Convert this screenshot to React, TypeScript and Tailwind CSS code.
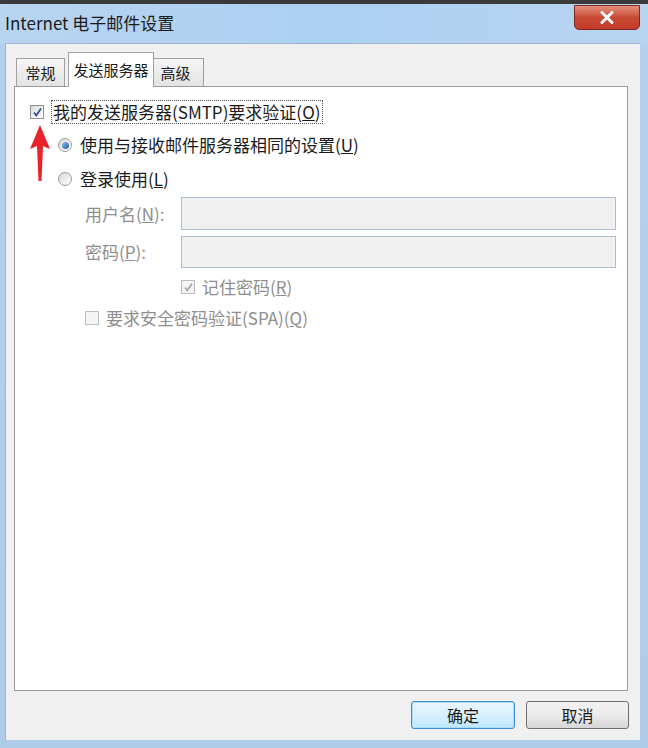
import React from "react";

const font = { fontFamily: '"Noto Sans CJK SC", "Noto Sans", sans-serif' };

function CheckBox({ checked, disabled }: { checked?: boolean; disabled?: boolean }) {
  return (
    <span
      className={`relative inline-flex w-[14px] h-[14px] shrink-0 items-center justify-center border ${
        disabled ? "border-[#bcbcbc] bg-[#f4f4f4]" : "border-[#8e8f8f] bg-gradient-to-br from-[#dcdcdc] to-[#ffffff]"
      }`}
    >
      {checked && (
        <svg width="11" height="11" viewBox="0 0 11 11">
          <path
            d="M2 5.5 L4.3 8.5 L9 1.5"
            fill="none"
            stroke={disabled ? "#a8a8a8" : "#2a4a9a"}
            strokeWidth="1.7"
          />
        </svg>
      )}
    </span>
  );
}

function Radio({ checked }: { checked?: boolean }) {
  return (
    <span className="inline-flex w-[14px] h-[14px] shrink-0 items-center justify-center rounded-full border border-[#9a9a9a] bg-gradient-to-br from-[#d8d8d8] to-[#ffffff]">
      {checked && (
        <span className="w-[7px] h-[7px] rounded-full bg-gradient-to-br from-[#8ec4ec] to-[#1c5a9c]" />
      )}
    </span>
  );
}

export default function App() {
  return (
    <div
      className="w-[648px] h-[748px] overflow-hidden flex flex-col bg-gradient-to-b from-[#b4d2ef] to-[#aecbe8] border-t-[4px] border-[#3a3a3a]"
      style={font}
    >
      {/* 标题栏 */}
      <div className="h-[39px] flex items-start justify-between pl-[5px] pr-[8px] bg-gradient-to-r from-[#b8d4ef] via-[#add0f2] to-[#b8d4ef]">
        <span className="mt-[8px] text-[17px] leading-[22px] text-[#1b1b1b]">Internet 电子邮件设置</span>
        <div className="mt-[1px] w-[66px] h-[25px] rounded-b-[5px] border border-[#7a2a20] bg-gradient-to-b from-[#e4907e] via-[#c94a36] to-[#c23a28] flex items-center justify-center">
          <svg width="14" height="13" viewBox="0 0 14 13">
            <path d="M2 1.5 L12 11.5 M12 1.5 L2 11.5" stroke="#ffffff" strokeWidth="3" strokeLinecap="round" />
          </svg>
        </div>
      </div>

      {/* 窗口主体 */}
      <div className="flex-1 ml-[5px] mr-[8px] mb-[8px] bg-[#f0f0f0] border-l border-t border-[#9fb4cc] flex flex-col pl-[8px] pr-[12px] pt-[7px]">
        {/* 标签页 */}
        <div className="flex items-end h-[35px] pl-[2px] text-[15px] leading-[20px] text-[#1b1b1b] whitespace-nowrap">
          <div className="h-[29px] w-[49px] border border-b-0 border-[#a0a0a0] bg-gradient-to-b from-[#f6f6f6] to-[#e2e2e2] flex items-center justify-center mb-[-1px]">
            常规
          </div>
          <div className="relative z-10 h-[35px] w-[86px] ml-[3px] border border-b-0 border-[#a0a0a0] bg-white flex items-center justify-center mb-[-1px]">
            发送服务器
          </div>
          <div className="h-[29px] w-[50px] border border-b-0 border-l-0 border-[#a0a0a0] bg-gradient-to-b from-[#f6f6f6] to-[#e2e2e2] flex items-center justify-center mb-[-1px] pr-[6px]">
            高级
          </div>
        </div>

        <div className="h-[605px] bg-white border border-[#9c9c9c] pl-[15px] pt-[14px] text-[17px] leading-[22px]">
          {/* 发送服务器验证 */}
          <div className="flex items-center h-[22px]">
            <CheckBox checked />
            <span className="ml-[7px] px-[1px] border border-dotted border-[#555] text-[#1b1b1b]">
              我的发送服务器(SMTP)要求验证(<span className="underline">O</span>)
            </span>
          </div>

          <div className="relative">
            <svg className="absolute left-[-1px] top-[2px]" width="22" height="56" viewBox="0 0 22 56">
              <path d="M11 0 L21 24 L14 21 L12.5 56 L9.5 56 L8 21 L1 24 Z" fill="#e8232a" />
            </svg>
          </div>

          <div className="flex items-center h-[22px] mt-[11px] ml-[28px] text-[#1b1b1b]">
            <Radio checked />
            <span className="ml-[8px]">
              使用与接收邮件服务器相同的设置(<span className="underline">U</span>)
            </span>
          </div>

          <div className="flex items-center h-[22px] mt-[12px] ml-[28px] text-[#1b1b1b]">
            <Radio />
            <span className="ml-[8px]">
              登录使用(<span className="underline">L</span>)
            </span>
          </div>

          {/* 登录信息（禁用） */}
          <div className="ml-[55px] mt-[7px] text-[#8e8e8e]">
            <div className="flex items-center h-[33px]">
              <span className="w-[96px]">
                用户名(<span className="underline">N</span>):
              </span>
              <div className="w-[435px] h-[33px] border border-[#a9bed4] bg-[#f0f0f0]" />
            </div>
            <div className="flex items-center h-[32px] mt-[6px]">
              <span className="w-[96px]">
                密码(<span className="underline">P</span>):
              </span>
              <div className="w-[435px] h-[32px] border border-[#a9bed4] bg-[#f0f0f0]" />
            </div>
            <div className="flex items-center h-[22px] mt-[8px] ml-[96px]">
              <CheckBox checked disabled />
              <span className="ml-[7px]">
                记住密码(<span className="underline">R</span>)
              </span>
            </div>
            <div className="flex items-center h-[22px] mt-[9px]">
              <CheckBox disabled />
              <span className="ml-[7px]">
                要求安全密码验证(SPA)(<span className="underline">Q</span>)
              </span>
            </div>
          </div>
        </div>

        {/* 按钮 */}
        <div className="flex justify-end gap-[11px] mt-[10px] text-[16px] text-[#1b1b1b]">
          <button className="w-[104px] h-[28px] rounded-[3px] border border-[#3c8fd0] bg-gradient-to-b from-[#eaf6fd] via-[#d9f0fc] to-[#bee6fd] shadow-[inset_0_0_0_1px_#a8dcf8] flex items-center justify-center">
            确定
          </button>
          <button className="w-[103px] h-[28px] rounded-[3px] border border-[#707070] bg-gradient-to-b from-[#f2f2f2] via-[#ebebeb] to-[#d6d6d6] flex items-center justify-center mr-[-1px]">
            取消
          </button>
        </div>
      </div>
    </div>
  );
}
